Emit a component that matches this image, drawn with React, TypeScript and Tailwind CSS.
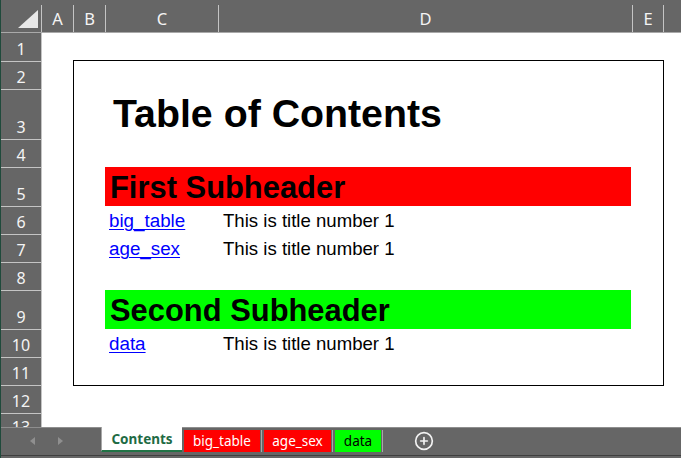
import React from "react";

type Col = { label: string; width: string };

const columns: Col[] = [
  { label: "A", width: "w-[32px]" },
  { label: "B", width: "w-[32px]" },
  { label: "C", width: "w-[113px]" },
  { label: "D", width: "w-[414px]" },
  { label: "E", width: "w-[31px]" },
];

const rows: { n: number; h: string }[] = [
  { n: 1, h: "h-[29px]" },
  { n: 2, h: "h-[28px]" },
  { n: 3, h: "h-[50px]" },
  { n: 4, h: "h-[28px]" },
  { n: 5, h: "h-[39px]" },
  { n: 6, h: "h-[28px]" },
  { n: 7, h: "h-[28px]" },
  { n: 8, h: "h-[28px]" },
  { n: 9, h: "h-[39px]" },
  { n: 10, h: "h-[28px]" },
  { n: 11, h: "h-[28px]" },
  { n: 12, h: "h-[28px]" },
  { n: 13, h: "h-[26px]" },
];

function ColHead({ label, width }: Col) {
  return (
    <div className={`flex h-full shrink-0 ${width}`}>
      <div className="flex flex-1 items-end justify-center pb-[5px] text-[16.5px] leading-none text-[#f4f4f4]">
        {label}
      </div>
      <div className="mt-[5px] w-px bg-[#c4c4c4]" />
    </div>
  );
}

function LinkRow({ link, row }: { link: string; row: string }) {
  return (
    <>
      <div className={`col-start-2 ${row} flex items-end pb-[3px] pl-[4px]`}>
        <span className="text-[18.8px] leading-none text-[#0000ff] underline underline-offset-[2px] decoration-1">
          {link}
        </span>
      </div>
      <div className={`col-start-3 ${row} flex items-end pb-[3px] pl-[5px]`}>
        <span className="text-[18.6px] leading-none text-black">This is title number 1</span>
      </div>
    </>
  );
}

function Sheet() {
  return (
    <div className="flex-1 overflow-hidden bg-white">
      <div className="ml-[31px] mt-[27px] grid w-[591px] grid-cols-[31px_113px_413px_32px] grid-rows-[28px_50px_28px_39px_28px_28px_28px_39px_28px_28px] border border-black font-['Liberation_Sans',Arial,sans-serif]">
        <div className="col-start-2 col-span-2 row-start-2 flex items-end pb-[6px] pl-[8px]">
          <span className="text-[39.3px] font-bold leading-none text-black">Table of Contents</span>
        </div>

        <div className="col-start-2 col-span-2 row-start-4 flex items-end bg-[#ff0000] pb-[2px] pl-[5px]">
          <span className="text-[30.9px] font-bold leading-none text-black">First Subheader</span>
        </div>
        <LinkRow link="big_table" row="row-start-5" />
        <LinkRow link="age_sex" row="row-start-6" />

        <div className="col-start-2 col-span-2 row-start-8 flex items-end bg-[#00ff00] pb-[2px] pl-[5px]">
          <span className="text-[30.9px] font-bold leading-none text-black">Second Subheader</span>
        </div>
        <LinkRow link="data" row="row-start-9" />
      </div>
    </div>
  );
}

function TabBar() {
  return (
    <div className="h-[31px] shrink-0 border-t border-[#8e8e8e] bg-[#666666] font-['Noto_Sans',sans-serif]">
      <div className="flex h-[27px] items-start">
        {/* scroll arrows */}
        <div className="flex h-[25px] w-[100px] items-center gap-[23px] pl-[29px]">
          <svg width="5" height="8" viewBox="0 0 5 8">
            <polygon points="5,0 5,8 0,4" fill="#8f8f8f" />
          </svg>
          <svg width="5" height="8" viewBox="0 0 5 8">
            <polygon points="0,0 0,8 5,4" fill="#8f8f8f" />
          </svg>
        </div>

        <div className="-mt-px flex h-[25px] w-[81px] items-center justify-center border-b-2 border-l border-b-[#217346] border-l-[#a8a8a8] bg-white pt-[3px]">
          <span className="text-[13.5px] font-bold leading-none text-[#1e6b44]">Contents</span>
        </div>

        <div className="ml-[2px] mt-[2px] flex h-[22px] w-[76px] items-center justify-center bg-[#ff0000] pt-[1px]">
          <span className="text-[13.5px] leading-none text-white">big_table</span>
        </div>
        <div className="ml-[1px] mt-[2px] h-[22px] w-px bg-[#a8a8a8]" />

        <div className="ml-[2px] mt-[2px] flex h-[22px] w-[67px] items-center justify-center bg-[#ff0000] pt-[1px]">
          <span className="text-[13.5px] leading-none text-white">age_sex</span>
        </div>
        <div className="ml-[1px] mt-[2px] h-[22px] w-px bg-[#a8a8a8]" />

        <div className="ml-[2px] mt-[2px] flex h-[22px] w-[46px] items-center justify-center bg-[#00ff00] pt-[1px]">
          <span className="text-[13.5px] leading-none text-black">data</span>
        </div>
        <div className="ml-[1px] mt-[2px] h-[22px] w-px bg-[#a8a8a8]" />

        {/* new sheet button */}
        <svg className="ml-[31px] mt-[3px]" width="20" height="20" viewBox="0 0 24 24" fill="none" stroke="#f2f2f2" strokeWidth="2" strokeLinecap="round">
          <circle cx="12" cy="12" r="10" />
          <path d="M8 12h8" />
          <path d="M12 8v8" />
        </svg>
      </div>
      <div className="h-px bg-[#3f3f3f]" />
    </div>
  );
}

export default function App() {
  return (
    <div className="flex h-[458px] w-[681px] overflow-hidden bg-[#666666] font-['Noto_Sans',sans-serif]">
      <div className="w-px shrink-0 bg-[#1f4a3b]" />
      <div className="flex min-w-0 flex-1 flex-col">
        {/* column letters */}
        <div className="flex h-[33px] shrink-0 border-b border-[#a9a9a9]">
          <div className="flex h-full w-[41px] shrink-0">
            <svg width="40" height="32" viewBox="0 0 40 32" className="shrink-0">
              <polygon points="17,28 37,28 37,10" fill="#e8e8e8" />
            </svg>
            <div className="mt-[5px] w-px bg-[#c4c4c4]" />
          </div>
          {columns.map((c) => (
            <ColHead key={c.label} {...c} />
          ))}
        </div>

        <div className="flex min-h-0 flex-1">
          {/* row numbers */}
          <div className="flex w-[41px] shrink-0 flex-col overflow-hidden border-r border-[#c4c4c4]">
            {rows.map((r) => (
              <div
                key={r.n}
                className={`flex ${r.h} shrink-0 items-end justify-center border-b border-[#c4c4c4] pb-[4px] text-[16px] leading-none text-[#f4f4f4]`}
              >
                {r.n}
              </div>
            ))}
          </div>
          <Sheet />
        </div>

        <TabBar />
      </div>
    </div>
  );
}
